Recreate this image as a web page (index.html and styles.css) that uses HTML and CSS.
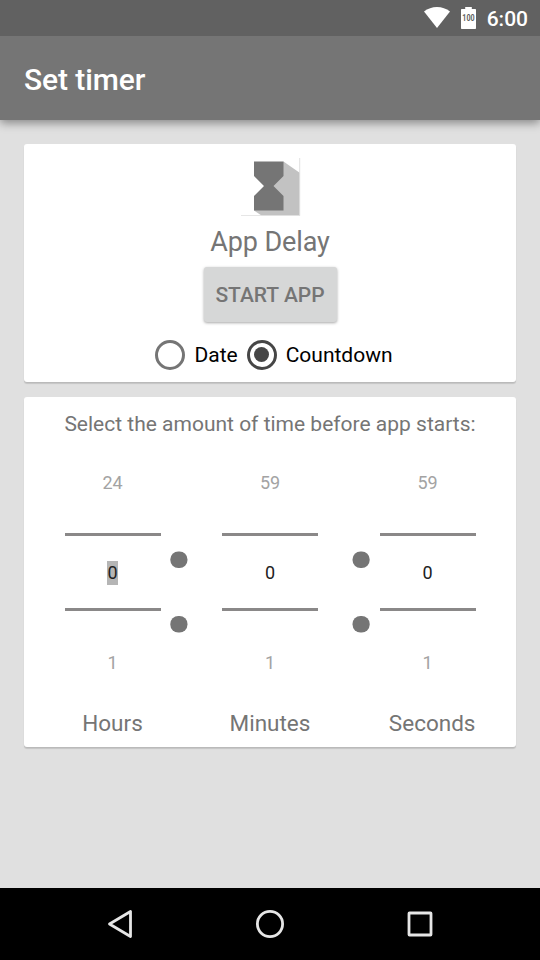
FILE: index.html
```html
<!DOCTYPE html>
<html lang="en">
<head>
<meta charset="utf-8">
<title>Set timer</title>
<link rel="stylesheet" href="styles.css">
</head>
<body>
<div class="status-bar">
  <svg class="wifi" width="26" height="21" viewBox="0 0 26 21"><path d="M0 4.6Q5.7 0 13 0t13 4.6L13 21z" fill="#fff"/></svg>
  <div class="battery">
    <svg width="15" height="22" viewBox="0 0 15 22"><path d="M4.200 0h6.600v2H14.300Q15 2 15 2.700V21.300Q15 22 14.300 22H.7Q0 22 0 21.300V2.700Q0 2 .7 2H4.200z" fill="#fff"/></svg>
    <span class="battery-level">100</span>
  </div>
  <span class="clock">6:00</span>
</div>
<header class="app-bar"><h1 class="title">Set timer</h1></header>
<main class="content">
  <section class="card app-card">
    <svg class="app-icon" width="72" height="72" viewBox="0 0 72 72">
      <path d="M49.500 17.500L66 29V71.500H27.500L20 66.500z" fill="#c2c2c2"/>
      <path d="M65.700 14V71.700H7" fill="none" stroke="#e0e0e0"/>
      <path d="M20 17.500h29.500V32L39.500 42l10 10V66.500H20V52l10-10-10-10z" fill="#757575"/>
    </svg>
    <div class="app-name">App Delay</div>
    <button class="start" type="button">START APP</button>
    <div class="modes">
      <span class="radio"></span><span class="mode-label first">Date</span>
      <span class="radio checked"></span><span class="mode-label">Countdown</span>
    </div>
  </section>
  <section class="card timer-card">
    <p class="prompt">Select the amount of time before app starts:</p>
    <div class="pickers">
      <div class="picker">
        <span class="neighbor">24</span>
        <span class="current"><span class="selected">0</span></span>
        <span class="neighbor">1</span>
      </div>
      <div class="colon"><svg class="dots" width="18" height="82" viewBox="0 0 18 82"><rect x=".3" y=".5" width="17.200" height="16.500" rx="8"/><rect x=".3" y="65" width="17.200" height="16.500" rx="8"/></svg></div>
      <div class="picker">
        <span class="neighbor">59</span>
        <span class="current">0</span>
        <span class="neighbor">1</span>
      </div>
      <div class="colon end"><svg class="dots" width="18" height="82" viewBox="0 0 18 82"><rect x=".5" y=".5" width="17.200" height="16.500" rx="8"/><rect x=".5" y="65" width="17.200" height="16.500" rx="8"/></svg></div>
      <div class="picker">
        <span class="neighbor">59</span>
        <span class="current">0</span>
        <span class="neighbor">1</span>
      </div>
    </div>
    <div class="units"><span>Hours</span><span>Minutes</span><span class="last">Seconds</span></div>
  </section>
</main>
<nav class="nav-bar">
  <svg width="30" height="30" viewBox="0 0 30 30"><path d="M25.500 2.500v25L4.500 15z"/></svg>
  <svg width="30" height="30" viewBox="0 0 30 30"><circle cx="15" cy="15" r="12.600"/></svg>
  <svg width="30" height="30" viewBox="0 0 30 30"><rect x="4" y="4" width="22" height="22" rx=".5"/></svg>
</nav>
</body>
</html>
```
FILE: styles.css
```css
* { box-sizing: border-box; }
body {
  margin: 0;
  height: 960px;
  display: flex;
  flex-direction: column;
  overflow: hidden;
  background: #e0e0e0;
  color: #757575;
  font-family: Roboto, "Liberation Sans", sans-serif;
}
.status-bar {
  position: relative;
  z-index: 1;
  height: 36px;
  flex: none;
  display: flex;
  align-items: flex-start;
  padding: 7px 12px 0 0;
  justify-content: flex-end;
  background: #616161;
  color: #fff;
}
.wifi { margin-right: 11px; }
.battery { position: relative; width: 15px; height: 22px; margin-right: 11px; }
.battery svg { display: block; }
.battery-level {
  position: absolute;
  inset: 7px -3px auto;
  text-align: center;
  font-size: 8.5px;
  line-height: 9px;
  font-weight: 700;
  color: #616161;
  transform: scaleX(.84);
}
.clock { font-size: 21px; line-height: 24px; font-weight: 500; }
.app-bar {
  height: 84px;
  flex: none;
  display: flex;
  align-items: center;
  padding: 4px 24px 0;
  background: #757575;
  box-shadow: 0 3px 9px rgba(0, 0, 0, .4);
}
.title { margin: 0; font-size: 30px; line-height: 36px; font-weight: 500; letter-spacing: -.1px; color: #fff; }
.content {
  flex: 1;
  display: flex;
  flex-direction: column;
  gap: 15px;
  padding: 24px 24px 0;
}
.card {
  display: flex;
  flex-direction: column;
  background: #fff;
  border-radius: 3px;
  box-shadow: 0 2px 1px rgba(0, 0, 0, .12), 0 1px 1px rgba(0, 0, 0, .06);
}
.app-card { height: 237.5px; align-items: center; }
.app-icon { flex: none; }
.app-name { margin-top: 10px; font-size: 27px; line-height: 32px; letter-spacing: -.1px; }
.start {
  width: 133px;
  height: 55px;
  margin: 9px 0 0;
  padding: 0;
  border: 0;
  border-radius: 3px;
  background: #d6d7d7;
  color: #757575;
  font: 500 21px/24px Roboto, sans-serif;
  white-space: nowrap;
  box-shadow: 0 1px 3px rgba(0, 0, 0, .35);
}
.modes { display: flex; align-items: center; margin: 17.5px 0 0 8px; color: #000; }
.radio {
  width: 30px;
  height: 30px;
  display: grid;
  place-items: center;
  border: 3px solid #757575;
  border-radius: 50%;
}
.checked { border-color: #464646; }
.checked::after { content: ""; width: 15px; height: 15px; border-radius: 50%; background: #464646; }
.mode-label { margin-left: 9px; font-size: 21px; line-height: 26px; padding-top: 1px; }
.first { margin-right: 9px; }
.timer-card { height: 350px; padding: 0 40.5px; }
.prompt { margin: 14.5px -10px 0; text-align: center; font-size: 21px; line-height: 26px; white-space: nowrap; }
.pickers { display: grid; grid-template-columns: 96px 61.5px 96px 61.5px 96px; }
.picker {
  display: grid;
  grid-template-rows: 96px 78px 102px;
  text-align: center;
  font-size: 18px;
  line-height: 24px;
}
.neighbor { color: #a3a3a3; padding-top: 34px; }
.neighbor:last-child { padding-top: 40px; }
.current { color: #212121; padding-top: 25px; border: solid #8a8888; border-width: 3px 0; }
.selected { display: inline-block; background: #b5b5b5; }
.colon { padding: 114px 9.5px 0; }
.dots { display: block; fill: #757575; }
.end { display: flex; justify-content: flex-end; }
.units { display: grid; grid-template-columns: 96px 1fr 96px; text-align: center; font-size: 22.5px; line-height: 26px; margin-top: -3px; }
.last { text-align: right; }
.nav-bar {
  height: 72px;
  flex: none;
  display: flex;
  justify-content: center;
  align-items: center;
  gap: 120px;
  background: #000;
}
.nav-bar svg { fill: none; stroke: #e6e6e6; stroke-width: 2.8; stroke-linejoin: round; }
```
